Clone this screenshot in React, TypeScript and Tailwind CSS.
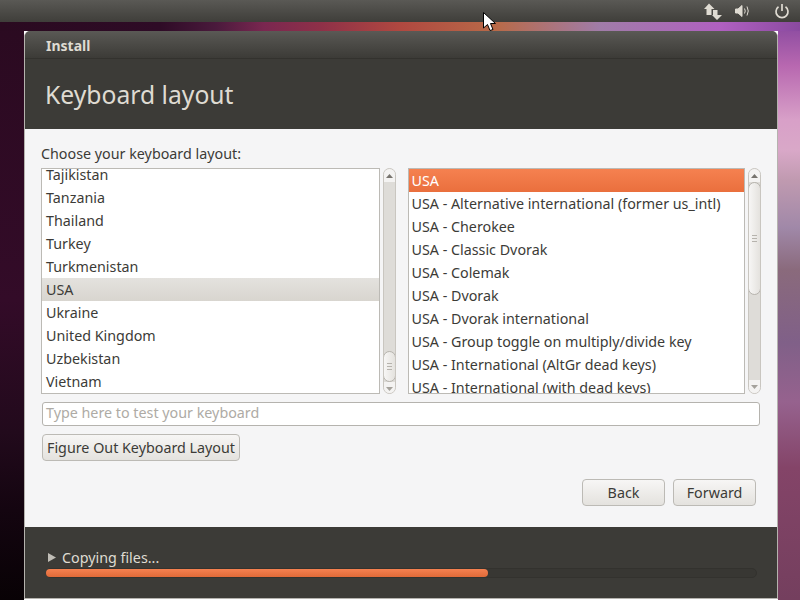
const left = ["Tajikistan","Tanzania","Thailand","Turkey","Turkmenistan","USA","Ukraine","United Kingdom","Uzbekistan","Vietnam"];
const right = ["USA","USA - Alternative international (former us_intl)","USA - Cherokee","USA - Classic Dvorak","USA - Colemak","USA - Dvorak","USA - Dvorak international","USA - Group toggle on multiply/divide key","USA - International (AltGr dead keys)","USA - International (with dead keys)"];

function Scrollbar({ thumbTop, thumbH }: { thumbTop: string; thumbH: string }) {
  return (
    <div className="ml-[3px] w-[13px] h-[226px] rounded-[7px] border border-[#c9c6c0] bg-[#dedcd8] flex flex-col overflow-hidden">
      <div className="h-[13px] shrink-0 bg-[#f4f3f2] flex items-center justify-center">
        <svg width="7" height="4" viewBox="0 0 7 4"><path d="M3.5 0L7 4H0z" fill="#77746e" /></svg>
      </div>
      <div className={`${thumbTop} shrink-0`} />
      <div className={`${thumbH} shrink-0 -mx-px rounded-[7px] border border-[#b6b3ad] bg-gradient-to-r from-[#f7f6f5] to-[#e4e2de] flex flex-col items-center justify-center gap-[2px]`}>
        <div className="w-[5px] h-px bg-[#b6b3ad]" />
        <div className="w-[5px] h-px bg-[#b6b3ad]" />
        <div className="w-[5px] h-px bg-[#b6b3ad]" />
      </div>
      <div className="flex-1" />
      <div className="h-[13px] shrink-0 bg-[#f4f3f2] flex items-center justify-center">
        <svg width="7" height="4" viewBox="0 0 7 4"><path d="M0 0H7L3.5 4z" fill="#a5a29c" /></svg>
      </div>
    </div>
  );
}

export default function App() {
  return (
    <div className="relative w-[800px] h-[600px] overflow-hidden flex flex-col [background:linear-gradient(90deg,#2a0a20_0%,#2e0b26_20%,#4a1a3c_27%,#7a2750_33%,#8e3048_40%,#b04840_50%,#b86a48_62%,#a07ca8_75%,#b060c0_90%,#8a4aa0_100%)_0_22px/100%_9px_no-repeat,linear-gradient(180deg,#2a0a20_0%,#330b28_50%,#220a1c_72%,#140510_85%,#080205_100%)_0_0/24px_100%_no-repeat,linear-gradient(180deg,#8a4aa0_4%,#b868b0_11%,#d8a0c8_20%,#d9a8c8_25%,#c09ab0_30%,#a088a8_38%,#8a6a7c_45%,#806088_57%,#96628e_67%,#844468_78%,#743f5e_100%)_100%_0/22px_100%_no-repeat] font-['Noto_Sans',sans-serif] text-[14.3px] text-[#3c3b37]">
      <div className="h-[22px] shrink-0 bg-gradient-to-b from-[#5a5955] to-[#3f3e3a] flex items-center justify-end">
        <svg className="mr-[13px]" width="18" height="17" viewBox="0 0 18 17" fill="#dfdbd2">
          <path d="M5 0.5L10.5 6H7.5V12H2.5V6H0z" />
          <path d="M9 7H13.5V12H18L13 17L8 12H9z" />
        </svg>
        <svg className="mr-[23px]" width="16" height="14" viewBox="0 0 16 14" fill="none" stroke="#dfdbd2">
          <path d="M0.5 5H3L7 1.5V12.5L3 9H0.5z" fill="#dfdbd2" />
          <path d="M9.5 4.5Q11 7 9.5 9.5" />
          <path d="M12 2.5Q14.5 7 12 11.5" />
        </svg>
        <svg className="mr-[10px]" width="16" height="16" viewBox="0 0 16 16" fill="none" stroke="#dfdbd2" strokeWidth="1.7">
          <path d="M4.5 3.8A6 6 0 1 0 11.5 3.8" />
          <path d="M8 1V8" />
        </svg>
      </div>

      <div className="flex-1 flex">
        <div className="ml-[24px] mt-[9px] w-[754px] h-[568px] rounded-t-[6px] border-x border-b border-[#b5b3ae] flex flex-col overflow-hidden bg-[#3c3b37]">
          <div className="h-[28px] shrink-0 bg-gradient-to-b from-[#5a5955] to-[#3c3b37] border-b border-[#33322e] pl-[21px] pt-[1px] flex items-center font-bold text-[#dfdbd2] text-[14px]">Install</div>
          <div className="h-[70px] shrink-0 pl-[20px] flex items-center text-[#dfdbd2] text-[24.7px] pt-[1px]">Keyboard layout</div>

          <div className="h-[398px] shrink-0 bg-[#f5f5f6] px-[16px] flex flex-col">
            <div className="h-[39px] shrink-0 flex items-end pb-[4px] leading-[20px]">Choose your keyboard layout:</div>
            <div className="flex shrink-0">
              <div className="w-[339px] h-[226px] bg-white border border-[#bcbab5] overflow-hidden">
                <div className="-mt-[6px]">
                  {left.map((t) => (
                    <div key={t} className={`h-[23px] pl-[4px] flex items-center ${t === "USA" ? "bg-gradient-to-b from-[#e4e2de] to-[#d8d5cf]" : ""}`}>{t}</div>
                  ))}
                </div>
              </div>
              <Scrollbar thumbTop="h-[169px]" thumbH="h-[31px]" />
              <div className="ml-[12px] w-[338px] h-[226px] bg-white border border-[#bcbab5] overflow-hidden">
                <div>
                  {right.map((t, i) => (
                    <div key={t} className={`h-[23px] pl-[3px] flex items-center ${i === 0 ? "bg-gradient-to-b from-[#f58150] to-[#ea6f3d] text-white" : ""}`}>{t}</div>
                  ))}
                </div>
              </div>
              <Scrollbar thumbTop="h-0" thumbH="h-[113px]" />
            </div>
            <div className="ml-px mt-[8px] w-[718px] h-[24px] shrink-0 rounded-[3px] border border-[#b5b3ae] bg-white pl-[3px] pb-[2px] flex items-center text-[#aeaba5]">Type here to test your keyboard</div>
            <div className="ml-px mt-[8px] w-[198px] h-[27px] shrink-0 rounded-[4px] border border-[#bcbab5] bg-gradient-to-b from-[#f7f6f5] to-[#e4e2de] flex items-center justify-center">Figure Out Keyboard Layout</div>
            <div className="mt-[18px] flex justify-end gap-[8px] pr-[5px]">
              <div className="w-[83px] h-[27px] rounded-[4px] border border-[#bcbab5] bg-gradient-to-b from-[#f7f6f5] to-[#e4e2de] flex items-center justify-center">Back</div>
              <div className="w-[83px] h-[27px] rounded-[4px] border border-[#bcbab5] bg-gradient-to-b from-[#f7f6f5] to-[#e4e2de] flex items-center justify-center">Forward</div>
            </div>
          </div>

          <div className="flex-1 px-[21px] flex flex-col">
            <div className="mt-[21px] h-[18px] pt-[1px] flex items-center text-[#dfdbd2]">
              <svg className="ml-[2px] mr-[6px]" width="8" height="9" viewBox="0 0 8 9"><path d="M0 0L8 4.5L0 9z" fill="#c0bdb6" /></svg>
              Copying files...
            </div>
            <div className="mt-[2px] w-[711px] h-[10px] rounded-[5px] bg-[#383733] border border-[#33322e]">
              <div className="-ml-px w-[442px] h-full rounded-[4px] bg-gradient-to-b from-[#f58150] to-[#e06a38]" />
            </div>
          </div>
        </div>
      </div>

      <svg className="absolute left-[483px] top-[12px]" width="14" height="20" viewBox="0 0 14 20">
        <path d="M0.5 0.5V16L4.5 12.5L7 18.5L10 17.5L7.5 11.5H12.5z" fill="#fff" stroke="#000" strokeWidth="1" />
      </svg>
    </div>
  );
}
